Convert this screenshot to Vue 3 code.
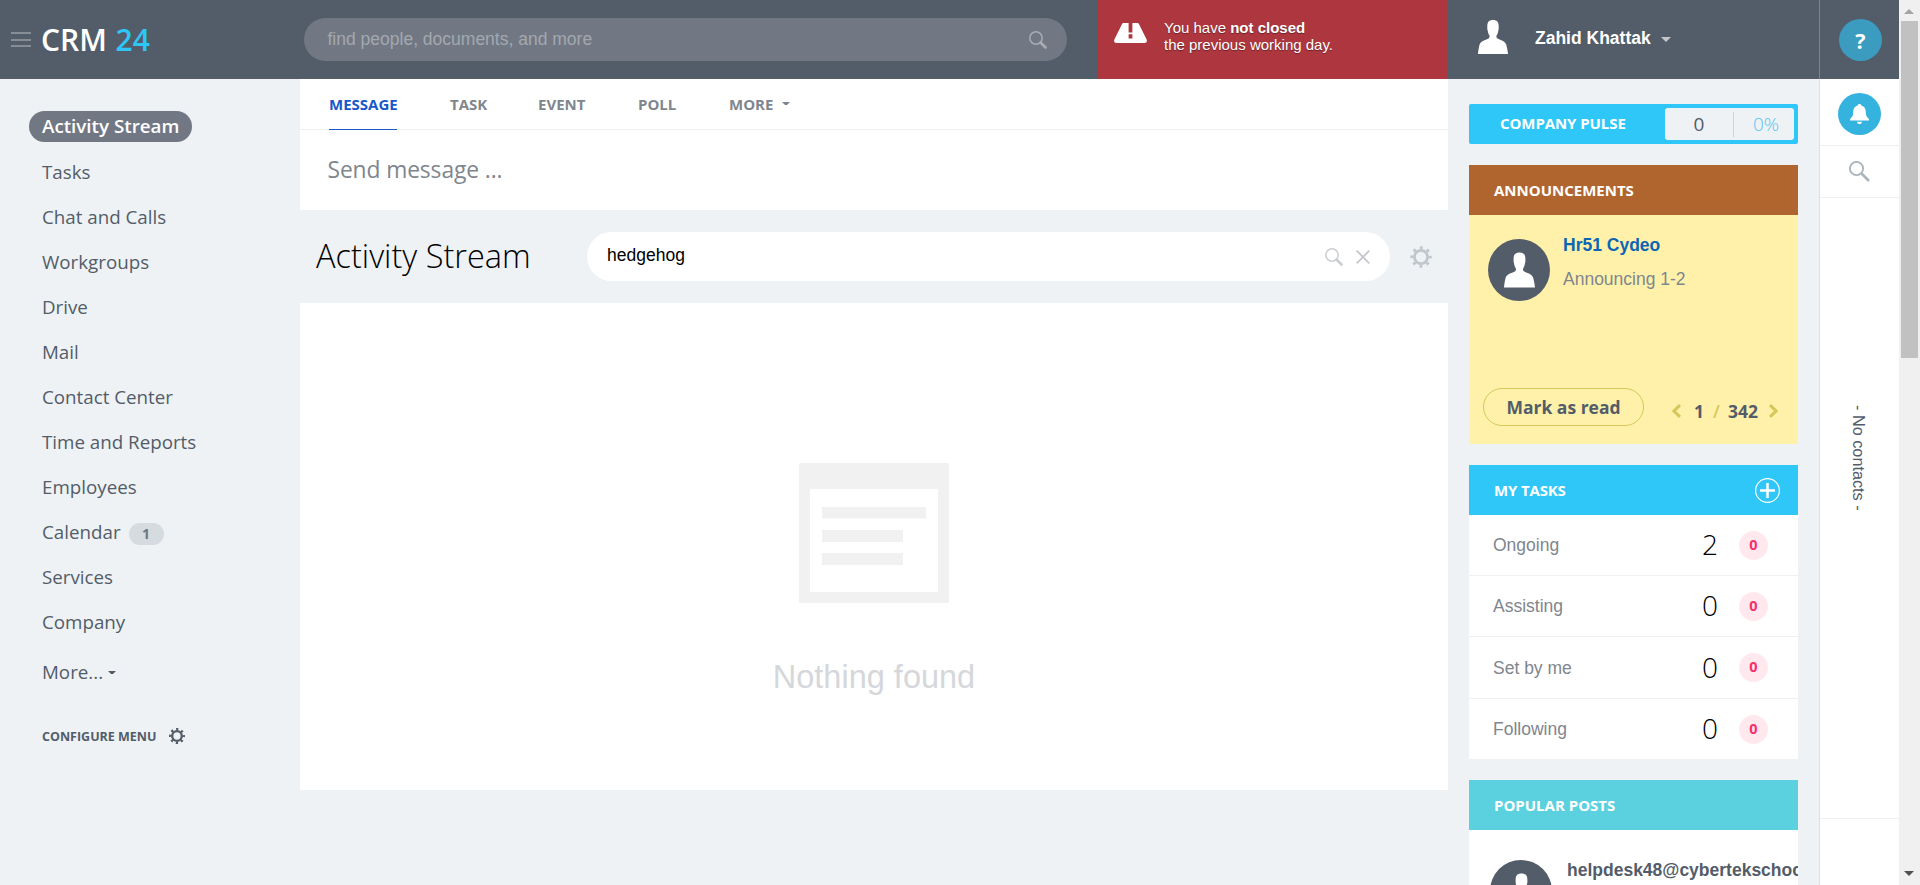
<script setup>
const menu = [
  { label: 'Activity Stream', active: true },
  { label: 'Tasks' },
  { label: 'Chat and Calls' },
  { label: 'Workgroups' },
  { label: 'Drive' },
  { label: 'Mail' },
  { label: 'Contact Center' },
  { label: 'Time and Reports' },
  { label: 'Employees' },
  { label: 'Calendar', badge: 1 },
  { label: 'Services' },
  { label: 'Company' },
]
const tasks = [
  { label: 'Ongoing', count: 2 },
  { label: 'Assisting', count: 0 },
  { label: 'Set by me', count: 0 },
  { label: 'Following', count: 0 },
]
const person =
  'M15 0c4 0 5.700 2 5.700 6c0 2 .2 3-.5 5c-.3 2-.9 3.500-1.700 4.500c-.3 2 .1 2.500 1.500 3.200c2.500 1.300 7 2 8.300 6c.7 3 1.400 5.800 1.700 9.300H0c.3-3.500.8-6.300 1.500-9.300c1.300-4 6-4.700 8.500-6c1.400-.7 1.800-1.200 1.500-3.200c-.8-1-1.400-2.500-1.700-4.500c-.7-2-.5-3-.5-5c0-4 1.700-6 5.700-6z'
</script>

<template>
  <div class="page">
    <header class="header">
      <div class="brand">
        <div class="burger"><i></i><i></i><i></i></div>
        <div class="logo">CRM <span>24</span></div>
      </div>
      <div class="search">
        <span>find people, documents, and more</span>
        <svg width="18" height="18" viewBox="0 0 18 18" fill="none" stroke="#a7adb3">
          <circle cx="7" cy="7" r="6.200" stroke-width="1.500" />
          <path d="M11.500 11.500L16.500 16.500" stroke-width="2.600" stroke-linecap="round" />
        </svg>
      </div>
      <div class="alert">
        <svg width="33" height="20" viewBox="0 0 35 20" preserveAspectRatio="none">
          <path d="M10 0H25Q26 0 26.600 1.200L34.600 16.500Q35.800 20 32.500 20H2.500Q-.8 20 .4 16.500L8.400 1.200Q9 0 10 0z" fill="#fff" />
          <path d="M15.500 0h4v9.500h-4zM15.500 11.300h4v4.200h-4z" fill="#ae373f" />
        </svg>
        <div class="alert-text">You have <b>not closed</b><br />the previous working day.</div>
      </div>
      <div class="user">
        <svg width="30" height="34" viewBox="0 0 30 34"><path :d="person" fill="#fff" /></svg>
        <b>Zahid Khattak</b>
        <svg class="user-caret" width="10" height="5" viewBox="0 0 10 5"><path d="M0 0h10L5 5z" fill="#c3c7cb" /></svg>
      </div>
      <div class="help"><div class="help-circle">?</div></div>
    </header>

    <div class="body">
      <nav class="menu">
        <div v-for="m in menu" :key="m.label" class="item">
          <span :class="{ active: m.active }" class="item-label">{{ m.label }}</span>
          <span v-if="m.badge" class="badge">{{ m.badge }}</span>
        </div>
        <div class="item more">
          <span class="item-label">More...</span>
          <svg width="8" height="4" viewBox="0 0 8 4"><path d="M0 0h8L5 3H3z" fill="#535c69" /></svg>
        </div>
        <div class="configure">
          <span>CONFIGURE MENU</span>
          <svg width="16" height="16" viewBox="0 0 22 22" fill="none" stroke="#535c69">
            <circle cx="11" cy="11" r="6.600" stroke-width="3.200" />
            <circle cx="11" cy="11" r="9.200" stroke-width="3.600" stroke-dasharray="3 4.226" stroke-dashoffset="1.500" />
          </svg>
        </div>
      </nav>

      <main class="main">
        <section class="composer">
          <div class="tabs">
            <span class="tab current">MESSAGE</span>
            <span class="tab task">TASK</span>
            <span class="tab event">EVENT</span>
            <span class="tab poll">POLL</span>
            <span class="tab last">MORE
              <svg width="8" height="4" viewBox="0 0 8 4"><path d="M0 0h8L5 3H3z" fill="#80868e" /></svg>
            </span>
          </div>
          <div class="placeholder">Send message ...</div>
        </section>
        <div class="titlebar">
          <h1>Activity Stream</h1>
          <div class="filter">
            <span class="query">hedgehog</span>
            <svg width="18" height="18" viewBox="0 0 18 18" fill="none" stroke="#cbced2">
              <circle cx="7" cy="7" r="6.200" stroke-width="1.500" />
              <path d="M11.500 11.500L16.500 16.500" stroke-width="2.600" stroke-linecap="round" />
            </svg>
            <svg class="clear" width="14" height="14" viewBox="0 0 14 14" fill="none" stroke="#c4c7cc" stroke-width="1.800">
              <path d="M.7.7L13.300 13.300M13.300.7L.7 13.300" />
            </svg>
          </div>
          <svg class="gear" width="22" height="22" viewBox="0 0 22 22" fill="none" stroke="#c1c6cd">
            <circle cx="11" cy="11" r="6.600" stroke-width="2.800" />
            <circle cx="11" cy="11" r="9.200" stroke-width="3" stroke-dasharray="2.800 4.426" stroke-dashoffset="1.400" />
          </svg>
        </div>
        <section class="empty">
          <svg width="150" height="140" viewBox="0 0 150 140">
            <rect width="150" height="140" rx="1.500" fill="#f1f1f1" />
            <rect x="11" y="26" width="128" height="103" rx="1" fill="#fff" />
            <path d="M23 44h104v11.500H23zM23 67h81v12H23zM23 90h81v12H23z" fill="#f1f1f1" />
          </svg>
          <p>Nothing found</p>
        </section>
      </main>

      <aside class="widgets">
        <div class="pulse">
          <span class="pulse-title">COMPANY PULSE</span>
          <div class="pulse-box">
            <span class="pulse-count">0</span>
            <span class="pulse-percent">0%</span>
          </div>
        </div>

        <section class="widget">
          <div class="widget-head brown">ANNOUNCEMENTS</div>
          <div class="announce">
            <div class="announce-top">
              <div class="avatar"><svg width="31" height="36" viewBox="0 0 30 34"><path :d="person" fill="#fff" /></svg></div>
              <div class="announce-text">
                <b>Hr51 Cydeo</b>
                <span>Announcing 1-2</span>
              </div>
            </div>
            <div class="announce-bottom">
              <div class="mark">Mark as read</div>
              <div class="pager">
                <svg width="9" height="14" viewBox="0 0 9 14" fill="none" stroke="#d6c75b" stroke-width="3"><path d="M8 1.200L2 7l6 5.800" /></svg>
                <b class="page-now">1</b><b class="slash">/</b><b class="page-all">342</b>
                <svg width="9" height="14" viewBox="0 0 9 14" fill="none" stroke="#d6c75b" stroke-width="3"><path d="M1 1.200L7 7l-6 5.800" /></svg>
              </div>
            </div>
          </div>
        </section>

        <section class="widget">
          <div class="widget-head blue">
            MY TASKS
            <svg width="25" height="25" viewBox="0 0 25 25" fill="none" stroke="#fff">
              <circle cx="12.500" cy="12.500" r="11.900" stroke-width="1.200" />
              <path d="M12.500 5v15M5 12.500h15" stroke-width="2.500" />
            </svg>
          </div>
          <div v-for="t in tasks" :key="t.label" class="task-row">
            <span class="task-label">{{ t.label }}</span>
            <span class="task-count">{{ t.count }}</span>
            <span class="task-badge">0</span>
          </div>
        </section>

        <section class="widget">
          <div class="widget-head teal">POPULAR POSTS</div>
          <div class="post">
            <div class="avatar"><svg width="31" height="36" viewBox="0 0 30 34"><path :d="person" fill="#fff" /></svg></div>
            <b>helpdesk48@cybertekschool.com</b>
          </div>
        </section>
      </aside>

      <aside class="rail">
        <div class="rail-bell">
          <div class="bell">
            <svg width="19" height="20" viewBox="0 0 19 20" fill="#fff">
              <path d="M9.500 0c1.100 0 1.700.7 1.900 1.500c3 .9 4.400 3 4.400 6.500c0 3.500.6 4.700 2.400 6.200c.8.800.8 1.400.8 2.300H0c0-.9 0-1.500.8-2.300C2.600 12.700 3.200 11.500 3.200 8c0-3.500 1.400-5.600 4.400-6.500C7.800.7 8.400 0 9.500 0z" />
              <path d="M7 17.700h5c-.2 1.500-1.200 2.300-2.500 2.300S7.200 19.200 7 17.700z" />
            </svg>
          </div>
        </div>
        <div class="rail-search">
          <svg width="21" height="21" viewBox="0 0 21 21" fill="none" stroke="#acb4bb">
            <circle cx="7.500" cy="7.500" r="6.600" stroke-width="1.900" />
            <path d="M12.500 12.500L20 20" stroke-width="2.600" />
          </svg>
        </div>
        <div class="rail-contacts"><span>- No contacts -</span></div>
        <div class="rail-foot"></div>
      </aside>
    </div>

    <div class="scrollbar">
      <svg width="10" height="5" viewBox="0 0 10 5"><path d="M0 5h10L5 0z" fill="#a3a3a3" /></svg>
      <div class="thumb"></div>
      <svg class="down" width="10" height="5" viewBox="0 0 10 5"><path d="M0 0h10L5 5z" fill="#505050" /></svg>
    </div>
  </div>
</template>

<style>
body { margin: 0; overflow: hidden; }
</style>

<style scoped>
* { box-sizing: border-box; }
svg { display: block; flex: none; }
.page {
  display: grid;
  grid-template: 79px 806px / 1899px 21px;
  width: 1920px;
  height: 885px;
  overflow: hidden;
  background: #eef2f4;
  font-family: "Open Sans", sans-serif;
  color: #535c69;
  white-space: nowrap;
}
.header {
  display: grid;
  grid-template-columns: 304px 763px 31px 350px 371px 80px;
  background: #535c69;
}
.brand { display: flex; align-items: flex-start; padding-left: 11px; }
.burger { display: flex; flex-direction: column; gap: 4.500px; width: 20px; margin: 32px 10px 0 0; }
.burger i { height: 2px; background: #868d96; }
.logo { font-size: 30px; line-height: 40px; margin-top: 20px; font-weight: 600; color: #fff; }
.logo span { margin-left: 1px; color: #2fc6f6; }
.search {
  display: flex;
  align-items: center;
  justify-content: space-between;
  height: 43px;
  margin-top: 18px;
  padding: 0 20px 0 23.500px;
  border-radius: 22px;
  background: #717884;
  font: 17.500px "Liberation Sans", sans-serif;
  color: #a3a8ae;
}
.alert {
  grid-column: 4;
  display: flex;
  gap: 17px;
  padding: 19px 0 0 16px;
  background: #ae373f;
}
.alert svg { margin-top: 4px; }
.alert-text {
  font: 15px/17px "Liberation Sans", sans-serif;
  color: #fff;
  text-shadow: 0 1px 1px rgba(0, 0, 0, 0.4);
}
.user { display: flex; align-items: flex-start; padding: 20px 0 0 30px; color: #fff; }
.user b { font: bold 17.500px/20px "Liberation Sans", sans-serif; margin: 8px 10px 0 27px; }
.user-caret { margin-top: 17px; }
.help { border-left: 1px solid #7d858f; padding: 19px 0 0 19px; }
.help-circle {
  width: 43px;
  height: 42px;
  border-radius: 50%;
  background: #3b9cc0;
  color: #fff;
  font-weight: 700;
  font-size: 21.500px;
  line-height: 43px;
  text-align: center;
}
.body {
  grid-row: 2;
  display: grid;
  grid-template-columns: 300px 1148px 372px 79px;
  min-height: 0;
}
.menu { padding: 25px 0 0 42px; }
.item { display: flex; align-items: center; height: 45px; font-size: 18.750px; font-weight: 400; }
.item-label.active {
  height: 31px;
  line-height: 29px;
  margin-left: -13px;
  padding: 0 13px;
  border-radius: 16px;
  background: #717884;
  color: #fff;
  font-weight: 600;
}
.badge {
  width: 35px;
  height: 22px;
  margin: 4px 0 0 8px;
  border-radius: 11px;
  background: #d5dbdf;
  color: #6f7781;
  font-size: 14px;
  font-weight: 700;
  line-height: 22px;
  text-align: center;
}
.more { margin-top: 5px; gap: 5px; }
.more svg { margin-top: 2px; }
.configure {
  display: flex;
  align-items: center;
  gap: 13px;
  height: 20px;
  margin-top: 32px;
  font-size: 12.500px;
  font-weight: 700;
}
.composer { height: 131px; background: #fff; }
.tabs { display: flex; height: 51px; padding-left: 29px; border-bottom: 1px solid #edeff0; }
.tab {
  display: flex;
  height: 51px;
  line-height: 51px;
  font-size: 15px;
  font-weight: 700;
  color: #80868e;
}
.tab.current { width: 68px; color: #1958c9; border-bottom: 1px solid #1958c9; margin-right: 53px; }
.task { width: 88px; }
.event { width: 100px; }
.poll { width: 91px; }
.last svg { margin: 23px 0 0 9px; }
.placeholder { padding-left: 27.500px; font-size: 22.800px; line-height: 79px; color: #80868e; letter-spacing: -0.100px; }
.titlebar { display: flex; align-items: flex-start; height: 93px; padding-top: 22px; }
h1 { width: 271px; margin: 0 0 0 16px; font-size: 32.500px; font-weight: 300; line-height: 48px; color: #000; }
.filter {
  display: flex;
  align-items: center;
  width: 803px;
  height: 49px;
  padding: 0 20px;
  border-radius: 25px;
  background: #fff;
}
.query { flex: 1; font: 17.500px "Liberation Sans", sans-serif; color: #000; margin-top: -3px; }
.clear { margin-left: 13px; }
.gear { margin: 14px 0 0 20px; }
.empty {
  display: flex;
  flex-direction: column;
  align-items: center;
  height: 487px;
  padding-top: 160px;
  background: #fff;
}
.empty p { margin: 54px 0 0; font: 32.500px/40px "Liberation Sans", sans-serif; color: #d5d7db; }
.widgets { padding: 25px 21px 0; border-right: 1px solid #dbe2e7; overflow: hidden; }
.pulse {
  display: flex;
  align-items: center;
  height: 40px;
  padding-right: 4px;
  border-radius: 2px;
  background: #2fc7f7;
}
.pulse-title { flex: 1; padding-left: 31px; font-size: 15px; font-weight: 700; line-height: 20px; margin-top: -3px; letter-spacing: -0.080px; color: #fff; }
.pulse-box { display: flex; align-items: center; width: 129px; height: 32px; border-radius: 3px; background: #eef2f4; font-size: 19px; line-height: 25px; }
.pulse-count { width: 69px; text-align: center; border-right: 1px solid #b5dcea; }
.pulse-percent { flex: 1; padding-left: 19px; color: #55c4f0; font-weight: 300; }
.widget { margin-top: 21px; }
.widget-head {
  display: flex;
  align-items: center;
  justify-content: space-between;
  height: 50px;
  padding: 0 18px 0 25px;
  font-size: 15px;
  font-weight: 700;
  color: #fff;
}
.brown { background: #b0652f; }
.blue { background: #2fc7f7; letter-spacing: -0.150px; }
.teal { background: #5bd1df; }
.announce { height: 229px; padding: 24px 20px 0 14px; background: #fff1a9; }
.announce-top { display: flex; gap: 13px; height: 149px; padding-left: 5px; }
.avatar {
  display: flex;
  justify-content: center;
  width: 62px;
  height: 62px;
  padding-top: 13px;
  flex: none;
  border-radius: 50%;
  background: #535c69;
}
.announce-text { display: flex; flex-direction: column; gap: 14px; margin-top: -4px; font: 17.500px/20px "Liberation Sans", sans-serif; color: #80868e; }
.announce-text b { color: #0c66b5; }
.announce-bottom { display: flex; justify-content: space-between; }
.mark {
  width: 161px;
  height: 38px;
  border: 1px solid #d6c75b;
  border-radius: 19px;
  font-size: 17.500px;
  font-weight: 700;
  line-height: 36px;
  text-align: center;
}
.pager { display: flex; align-items: center; height: 24px; margin-top: 11px; font-size: 17.500px; line-height: 24px; }
.page-now { width: 19px; margin-left: 13px; font-weight: 700; }
.slash { width: 15px; color: #d6c75b; font-weight: 600; }
.page-all { width: 41px; font-weight: 700; }
.task-row {
  display: flex;
  align-items: center;
  height: 61px;
  padding-left: 24px;
  border-bottom: 1px solid #edeff0;
  background: #fff;
}
.task-row:nth-of-type(4) { height: 62px; }
.task-row:last-child { border-bottom: 0; height: 60px; }
.task-label { width: 209px; font: 17.500px/20px "Liberation Sans", sans-serif; color: #80868e; }
.task-count { width: 37px; margin-top: -2px; font-size: 28px; font-weight: 300; line-height: 40px; color: #000; }
.task-badge {
  width: 29px;
  height: 29px;
  border-radius: 50%;
  background: #ffe8ee;
  color: #f7316b;
  font-size: 14.500px;
  font-weight: 700;
  line-height: 28px;
  text-align: center;
}
.post { display: flex; gap: 15px; height: 100px; padding: 30px 0 0 21px; overflow: hidden; background: #fff; }
.post b { font: bold 17.500px/20px "Liberation Sans", sans-serif; }
.rail { background: #fff; }
.rail-bell { height: 67px; padding: 14px 0 0 18px; border-bottom: 1px solid #edeff0; }
.bell { display: flex; align-items: center; justify-content: center; width: 43px; height: 42px; border-radius: 50%; background: #35b3df; }
.rail-search { height: 52px; padding: 15px 0 0 29px; border-bottom: 1px solid #edeff0; }
.rail-contacts { display: flex; height: 621px; padding: 207px 0 0 28.500px; border-bottom: 1px solid #edeff0; }
.rail-contacts span { writing-mode: vertical-rl; font: 16.250px/20px "Liberation Sans", sans-serif; }
.scrollbar {
  grid-area: 1 / 2 / 3 / 3;
  display: flex;
  flex-direction: column;
  align-items: center;
  padding: 9px 1px 9px 0;
  background: #f0f0f0;
}
.thumb { width: 17px; height: 337px; margin: 7px 0 auto; background: #c1c1c1; }
</style>
